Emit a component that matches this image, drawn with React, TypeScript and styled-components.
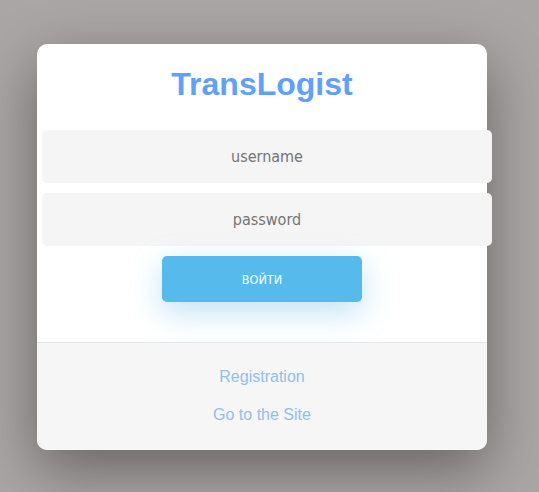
import React from "react";
import styled, { createGlobalStyle } from "styled-components";

const Global = createGlobalStyle`
  html, body { margin: 0; padding: 0; }
  body {
    background: #aaa6a5;
    min-height: 492px;
    font-family: "Liberation Sans", Arial, sans-serif;
  }
`;

const Page = styled.div`
  min-height: 492px;
  padding: 44px 0 0 37px;
  box-sizing: border-box;
`;

const Card = styled.div`
  width: 450px;
  background: #ffffff;
  border-radius: 10px;
  box-shadow: 0 20px 60px rgba(0, 0, 0, 0.4);
  display: flex;
  flex-direction: column;
`;

const Title = styled.h1`
  margin: 0;
  padding: 22px 0 27px;
  line-height: 37px;
  font-size: 32px;
  font-weight: 700;
  color: #5fa0fb;
  text-align: center;
  font-family: "Liberation Sans", Arial, sans-serif;
`;

const Form = styled.form`
  display: flex;
  flex-direction: column;
  align-items: center;
  gap: 10px;
  padding-bottom: 40px;
`;

const Input = styled.input`
  width: 450px;
  height: 53px;
  margin-left: 10px;
  box-sizing: border-box;
  border: none;
  outline: none;
  border-radius: 5px;
  background: #f5f5f5;
  text-align: center;
  font-family: "DejaVu Sans Condensed", "DejaVu Sans", sans-serif;
  font-size: 16px;
  color: #777;
  &::placeholder { color: #747474; }
`;

const Button = styled.button`
  width: 200px;
  height: 46px;
  border: none;
  border-radius: 5px;
  background: #56baed;
  color: #fff;
  font-family: "DejaVu Sans Condensed", "DejaVu Sans", sans-serif;
  font-size: 12.5px;
  text-transform: uppercase;
  box-shadow: 0 10px 30px 0 rgba(95, 186, 233, 0.4);
  cursor: pointer;
`;

const Footer = styled.div`
  background: #f6f6f6;
  border-top: 1px solid #dce8f1;
  border-radius: 0 0 10px 10px;
  padding: 24px 0 26px;
  display: flex;
  flex-direction: column;
  align-items: center;
  gap: 19px;
`;

const Link = styled.a`
  font-size: 16px;
  line-height: 19px;
  color: #92bfe7;
  text-decoration: none;
  font-family: "Liberation Sans", Arial, sans-serif;
`;

export default function App() {
  return (
    <>
      <Global />
      <Page>
        <Card>
          <Title>TransLogist</Title>
          <Form onSubmit={(e) => e.preventDefault()}>
            <Input type="text" placeholder="username" />
            <Input type="password" placeholder="password" />
            <Button type="submit">Войти</Button>
          </Form>
          <Footer>
            <Link href="#">Registration</Link>
            <Link href="#">Go to the Site</Link>
          </Footer>
        </Card>
      </Page>
    </>
  );
}
